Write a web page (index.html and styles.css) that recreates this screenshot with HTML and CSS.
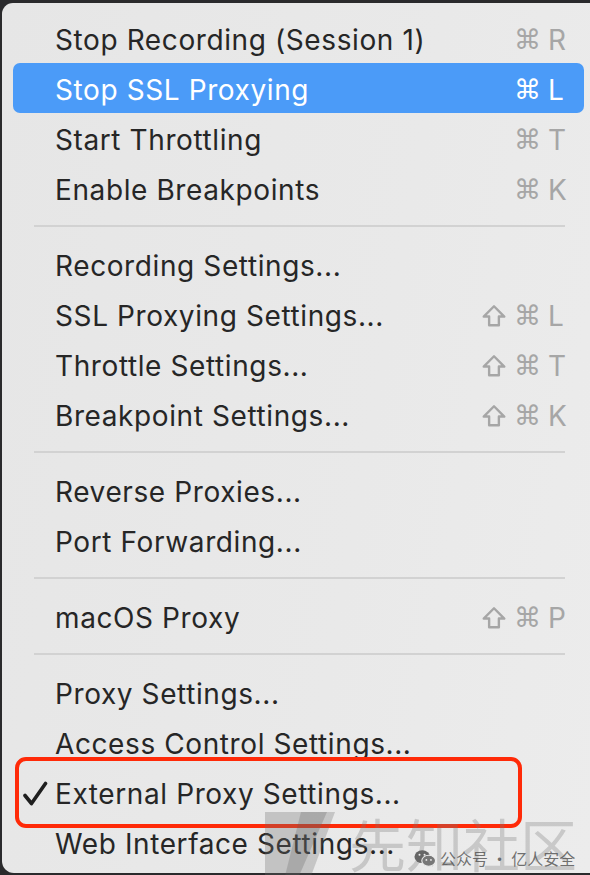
FILE: index.html
```html
<!DOCTYPE html>
<html lang="en">

<head>
    <meta charset="UTF-8">
    <meta name="viewport" content="width=device-width, initial-scale=1.0">
    <title>Proxy menu</title>
    <link rel="stylesheet" href="styles.css">
</head>

<body>
    <div class="menu">
        <div class="item"><span class="check"></span><span class="label">Stop Recording (Session 1)</span><span class="keys"><span class="cmd">⌘</span><span class="key">R</span></span></div>
        <div class="item active"><span class="check"></span><span class="label">Stop SSL Proxying</span><span class="keys"><span class="cmd">⌘</span><span class="key">L</span></span></div>
        <div class="item"><span class="check"></span><span class="label">Start Throttling</span><span class="keys"><span class="cmd">⌘</span><span class="key">T</span></span></div>
        <div class="item"><span class="check"></span><span class="label">Enable Breakpoints</span><span class="keys"><span class="cmd">⌘</span><span class="key">K</span></span></div>
        <div class="sep"></div>
        <div class="item"><span class="check"></span><span class="label">Recording Settings...</span></div>
        <div class="item"><span class="check"></span><span class="label">SSL Proxying Settings...</span><span class="keys"><svg class="shift" viewBox="0 0 24 24"><path d="M12 3 L21.5 12.5 H16.5 V20.5 H7.5 V12.5 H2.5 Z" /></svg><span class="cmd">⌘</span><span class="key">L</span></span></div>
        <div class="item"><span class="check"></span><span class="label">Throttle Settings...</span><span class="keys"><svg class="shift" viewBox="0 0 24 24"><path d="M12 3 L21.5 12.5 H16.5 V20.5 H7.5 V12.5 H2.5 Z" /></svg><span class="cmd">⌘</span><span class="key">T</span></span></div>
        <div class="item"><span class="check"></span><span class="label">Breakpoint Settings...</span><span class="keys"><svg class="shift" viewBox="0 0 24 24"><path d="M12 3 L21.5 12.5 H16.5 V20.5 H7.5 V12.5 H2.5 Z" /></svg><span class="cmd">⌘</span><span class="key">K</span></span></div>
        <div class="sep"></div>
        <div class="item"><span class="check"></span><span class="label">Reverse Proxies...</span></div>
        <div class="item"><span class="check"></span><span class="label">Port Forwarding...</span></div>
        <div class="sep"></div>
        <div class="item"><span class="check"></span><span class="label">macOS Proxy</span><span class="keys"><svg class="shift" viewBox="0 0 24 24"><path d="M12 3 L21.5 12.5 H16.5 V20.5 H7.5 V12.5 H2.5 Z" /></svg><span class="cmd">⌘</span><span class="key">P</span></span></div>
        <div class="sep"></div>
        <div class="item"><span class="check"></span><span class="label">Proxy Settings...</span></div>
        <div class="item"><span class="check"></span><span class="label">Access Control Settings...</span></div>
        <div class="item"><span class="check"><svg class="tick" viewBox="0 0 26 26"><path d="M3 14.5 L9.5 22.5 L23.5 2.5" /></svg></span><span class="label">External Proxy Settings...</span><span class="mark"></span></div>
        <div class="item"><span class="check"></span><span class="label">Web Interface Settings...</span></div>

        <div class="watermark">
            <svg class="wm-logo" viewBox="0 0 70 66">
                <path d="M0 2 H62 L34 66 H0 Z" fill="rgba(110,110,110,0.3)" />
                <path d="M36 2 H70 L46 66 H20 Z" fill="rgba(90,90,90,0.25)" />
            </svg>
            <span class="wm-title">先知社区</span>
            <span class="wm-sub">
                <svg class="wechat" viewBox="0 0 24 20">
                    <ellipse cx="9" cy="8" rx="8.5" ry="7" fill="#666" />
                    <ellipse cx="16" cy="12.5" rx="7.5" ry="6" fill="#777" stroke="#ececec" stroke-width="1.2" />
                    <circle cx="6" cy="6" r="1.1" fill="#eee" />
                    <circle cx="11.5" cy="6" r="1.1" fill="#eee" />
                    <circle cx="13.5" cy="11.5" r="1" fill="#eee" />
                    <circle cx="18.5" cy="11.5" r="1" fill="#eee" />
                </svg>
                公众号 · 亿人安全
            </span>
        </div>
    </div>
</body>

</html>
```

FILE: styles.css
```css
html,
body {
    margin: 0;
    height: 100%;
    overflow: hidden;
}

body {
    background-color: #2a2a2c;
    font-family: Inter, "Noto Sans", sans-serif;
}

.menu {
    position: relative;
    margin: 3px 0 0 2px;
    height: 870px;
    box-sizing: border-box;
    padding: 10px 6px 0 11px;
    border-radius: 11px 0 0 12px;
    background: linear-gradient(100deg, #e6e6e6 0%, #e9e9e9 60%, #ececec 100%);
}

.item {
    position: relative;
    display: flex;
    align-items: center;
    height: 50px;
    box-sizing: border-box;
    padding: 3px 16px 0 0;
    border-radius: 7px;
    color: #262626;
    font-size: 28px;
    letter-spacing: 0.6px;
}

.item.active {
    background-color: #4b9bf8;
    color: #ffffff;
}

.check {
    display: flex;
    align-items: center;
    width: 42px;
    height: 26px;
    flex-shrink: 0;
    padding-left: 9px;
    box-sizing: border-box;
}

.tick {
    width: 26px;
    height: 26px;
    fill: none;
    stroke: #1f1f1f;
    stroke-width: 3.6;
    stroke-linecap: round;
    stroke-linejoin: round;
}

.label {
    flex: 1;
    white-space: nowrap;
}

.keys {
    display: flex;
    align-items: center;
    gap: 7px;
    color: #a6a6a6;
    letter-spacing: 0;
}

.item.active .keys {
    color: #ffffff;
}

.cmd {
    font-family: "DejaVu Sans", sans-serif;
    font-size: 27px;
}

.key {
    width: 20px;
    font-size: 28px;
}

.shift {
    width: 26px;
    height: 26px;
    fill: none;
    stroke: #a6a6a6;
    stroke-width: 2.2;
    stroke-linejoin: round;
}

.sep {
    height: 2px;
    margin: 12px 19px 12px 21px;
    background-color: #d2d2d2;
}

.mark {
    position: absolute;
    left: 2px;
    top: -10px;
    width: 507px;
    height: 71px;
    box-sizing: border-box;
    border: 4px solid #ff2a08;
    border-radius: 11px;
}

.watermark {
    position: absolute;
    left: 263px;
    top: 803px;
    display: flex;
    align-items: flex-start;
    pointer-events: none;
}

.wm-logo {
    width: 70px;
    height: 66px;
    margin-top: 4px;
}

.wm-title {
    margin-left: 14px;
    font-family: "Noto Sans CJK SC", sans-serif;
    font-size: 57px;
    line-height: 72px;
    color: rgba(120, 120, 120, 0.3);
}

.wm-sub {
    position: absolute;
    left: 149px;
    top: 40px;
    display: flex;
    align-items: center;
    gap: 4px;
    font-family: "Noto Sans CJK SC", sans-serif;
    font-size: 16px;
    color: rgba(70, 70, 70, 0.75);
    white-space: nowrap;
}

.wechat {
    width: 22px;
    height: 19px;
}
```
